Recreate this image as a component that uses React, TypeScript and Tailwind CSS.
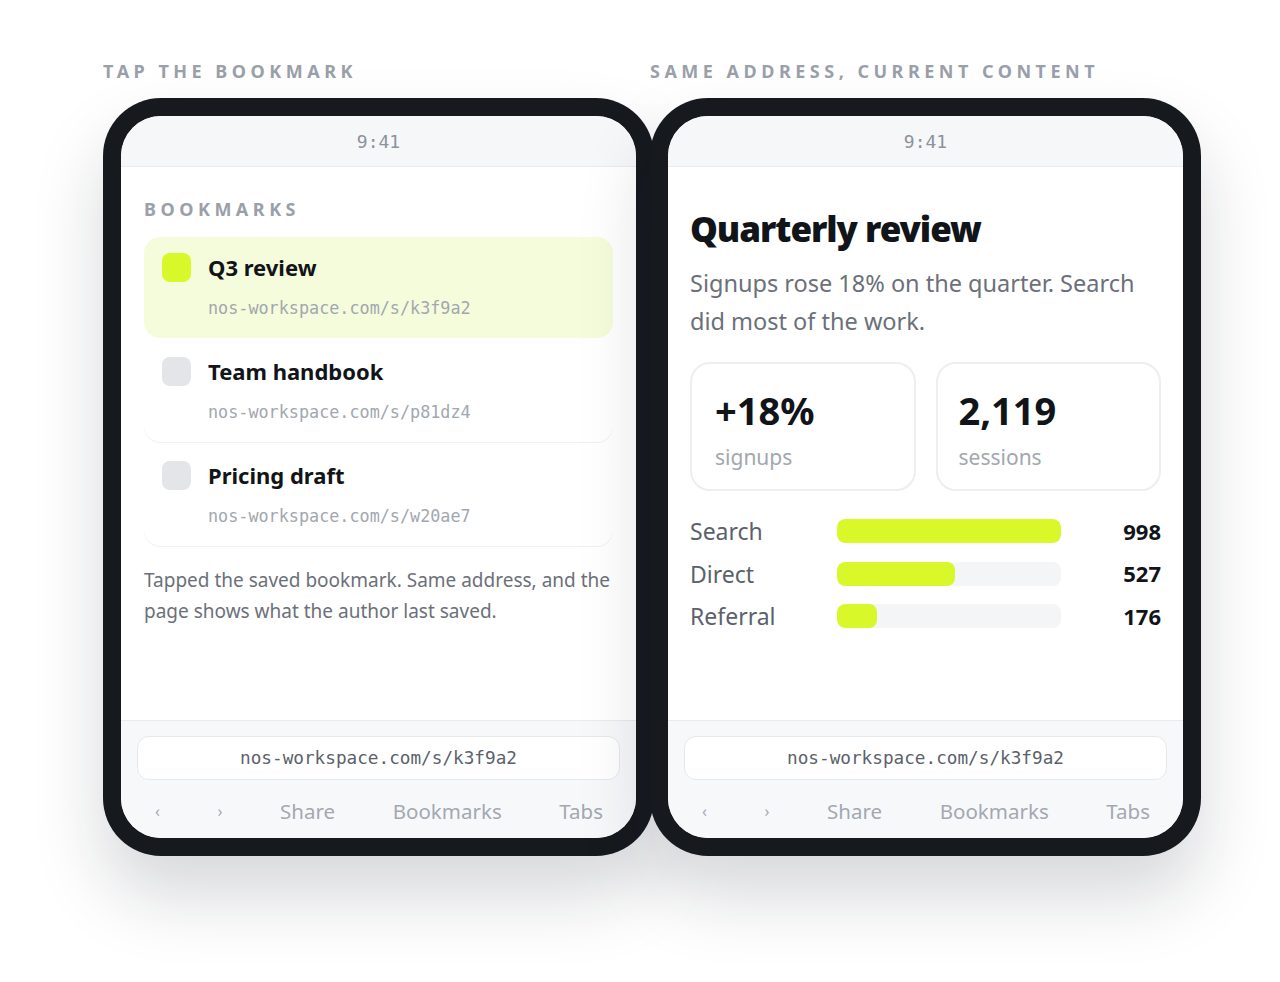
import React from 'react';

const sans = { fontFamily: '"Noto Sans", "Open Sans", sans-serif' };
const mono = { fontFamily: '"DejaVu Sans Mono", "Liberation Mono", monospace' };

const bookmarks = [
  { title: 'Q3 review', url: 'nos-workspace.com/s/k3f9a2', active: true },
  { title: 'Team handbook', url: 'nos-workspace.com/s/p81dz4', active: false },
  { title: 'Pricing draft', url: 'nos-workspace.com/s/w20ae7', active: false },
];

const sources = [
  { label: 'Search', value: 998 },
  { label: 'Direct', value: 527 },
  { label: 'Referral', value: 176 },
];

function Phone({ children }: { children: React.ReactNode }) {
  return (
    <div className="h-[758px] w-[551px] rounded-[58px] bg-[#16191e] p-[18px] shadow-[0_40px_70px_rgba(15,23,42,0.17)]">
      <div className="flex h-full flex-col overflow-hidden rounded-[40px] bg-white">
        {/* Status bar */}
        <div className="flex h-[51px] shrink-0 items-center justify-center border-b border-[#e9ebee] bg-[#f6f7f9]">
          <span className="text-[18px] text-[#8d929b]" style={mono}>9:41</span>
        </div>

        <div className="flex-1">{children}</div>

        {/* Browser chrome */}
        <div className="flex h-[118px] shrink-0 flex-col border-t border-[#e9ebee] bg-[#f7f8fa] px-[16px] pt-[15px]">
          <div className="flex h-[44px] items-center justify-center rounded-xl border border-[#e6e8eb] bg-white">
            <span className="text-[17.7px] text-[#5b616b]" style={mono}>nos-workspace.com/s/k3f9a2</span>
          </div>
          <div className="flex flex-1 items-center justify-between pl-[18px] pr-[17px] pt-[4px] text-[20.5px] text-[#a3a8b1]">
            <span className="text-[16px]">‹</span>
            <span className="text-[16px]">›</span>
            <span>Share</span>
            <span>Bookmarks</span>
            <span>Tabs</span>
          </div>
        </div>
      </div>
    </div>
  );
}

export default function App() {
  return (
    <div className="flex min-h-screen justify-center bg-white pl-[24px] pt-[59px]" style={sans}>
      <div className="flex">
        <div className="relative z-0 flex flex-col">
          <div className="mb-[15px] h-[24px] text-[18px] font-bold uppercase leading-[24px] tracking-[0.25em] text-[#9aa0aa]">
            Tap the bookmark
          </div>
          <Phone>
            <div className="px-[23px] pt-[30px]">
              <div className="h-[24px] text-[18px] font-bold uppercase leading-[24px] tracking-[0.25em] text-[#9aa0aa]">
                Bookmarks
              </div>
              <div className="mt-[16px] flex flex-col gap-[3px]">
                {bookmarks.map((b) => (
                  <div
                    key={b.title}
                    className={
                      b.active
                        ? 'h-[101px] rounded-2xl bg-[#f5fcdb] px-[18px] pt-[16px]'
                        : 'h-[101px] rounded-2xl bg-white px-[18px] pt-[16px] shadow-[0_1px_0_#eef0f2]'
                    }
                  >
                    <div className="flex items-center gap-[17px]">
                      <div
                        className={
                          b.active
                            ? 'h-[29px] w-[29px] shrink-0 rounded-lg bg-[#d8f82a]'
                            : 'h-[29px] w-[29px] shrink-0 rounded-lg bg-[#e3e5e9]'
                        }
                      />
                      <span className="text-[22px] font-bold leading-[29px] text-[#111418]">{b.title}</span>
                    </div>
                    <div className="ml-[46px] mt-[14px] text-[16.8px] leading-[24px] text-[#a2a7af]" style={mono}>
                      {b.url}
                    </div>
                  </div>
                ))}
              </div>
              <p className="mt-[19px] text-[19px] leading-[31px] text-[#6b7079]">
                Tapped the saved bookmark. Same address, and the page shows what the author last saved.
              </p>
            </div>
          </Phone>
        </div>

        <div className="relative z-10 -ml-[4px] flex flex-col">
          <div className="mb-[15px] h-[24px] text-[18px] font-bold uppercase leading-[24px] tracking-[0.25em] text-[#9aa0aa]">
            Same address, current content
          </div>
          <Phone>
            <div className="px-[22px] pt-[40px]">
              <h1 className="text-[35px] font-black leading-[44px] tracking-[-0.03em] text-[#111418]">Quarterly review</h1>
              <p className="mt-[13px] text-[23.5px] leading-[38px] text-[#6b7079]">
                Signups rose 18% on the quarter. Search did most of the work.
              </p>
              <div className="mt-[22px] grid grid-cols-2 gap-[20px]">
                <div className="h-[129px] rounded-[20px] border-2 border-[#eceef1] px-[23px] pt-[23px]">
                  <div className="text-[38px] font-bold leading-[46px] text-[#111418]">+18%</div>
                  <div className="mt-[10px] text-[21px] leading-[28px] text-[#a2a7af]">signups</div>
                </div>
                <div className="h-[129px] rounded-[20px] border-2 border-[#eceef1] px-[21px] pt-[23px]">
                  <div className="text-[38px] font-bold leading-[46px] text-[#111418]">2,119</div>
                  <div className="mt-[10px] text-[21px] leading-[28px] text-[#a2a7af]">sessions</div>
                </div>
              </div>
              <div className="mt-[19px] flex flex-col">
                {sources.map((s) => (
                  <div key={s.label} className="flex h-[42.5px] items-center">
                    <span className="w-[147px] shrink-0 text-[23px] text-[#5b616b]">{s.label}</span>
                    <div className="h-[24px] w-[224px] shrink-0 overflow-hidden rounded-lg bg-[#f4f5f7]">
                      <div className="h-full rounded-lg bg-[#d8f82a]" style={{ width: `${(s.value / 998) * 100}%` }} />
                    </div>
                    <span className="flex-1 text-right text-[22px] font-bold text-[#111418]">{s.value}</span>
                  </div>
                ))}
              </div>
            </div>
          </Phone>
        </div>
      </div>
    </div>
  );
}
